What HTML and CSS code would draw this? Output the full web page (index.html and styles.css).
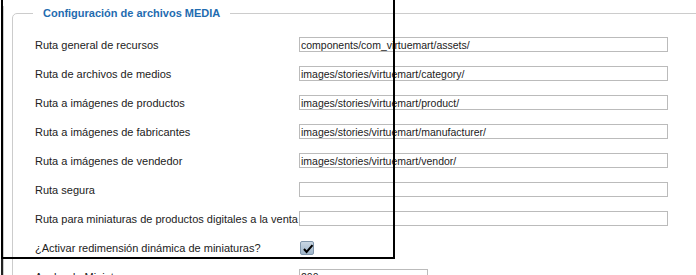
FILE: index.html
```html
<!DOCTYPE html>
<html lang="es">
<head>
    <meta charset="UTF-8">
    <meta name="viewport" content="width=device-width, initial-scale=1.0">
    <title>Configuración MEDIA</title>
    <link rel="stylesheet" href="styles.css">
</head>
<body>

    <div class="page">
        <div class="inner">
            <fieldset class="panel">
                <legend>Configuración de archivos MEDIA</legend>
                <div class="form">
                    <label>Ruta general de recursos</label>
                    <input class="field" type="text" value="components/com_virtuemart/assets/">

                    <label>Ruta de archivos de medios</label>
                    <input class="field" type="text" value="images/stories/virtuemart/category/">

                    <label>Ruta a imágenes de productos</label>
                    <input class="field" type="text" value="images/stories/virtuemart/product/">

                    <label>Ruta a imágenes de fabricantes</label>
                    <input class="field" type="text" value="images/stories/virtuemart/manufacturer/">

                    <label>Ruta a imágenes de vendedor</label>
                    <input class="field" type="text" value="images/stories/virtuemart/vendor/">

                    <label>Ruta segura</label>
                    <input class="field" type="text" value="">

                    <label>Ruta para miniaturas de productos digitales a la venta</label>
                    <input class="field" type="text" value="">

                    <label>¿Activar redimensión dinámica de miniaturas?</label>
                    <span class="check">
                        <svg width="12" height="12" viewBox="0 0 12 12">
                            <path d="M2 6 L4.6 9 L10.5 2.2" fill="none" stroke="#000" stroke-width="2"/>
                        </svg>
                    </span>

                    <label>Ancho de Miniatura</label>
                    <input class="field short" type="text" value="200">
                </div>
            </fieldset>
        </div>
        <div class="marker"></div>
    </div>

</body>
</html>
```

FILE: styles.css
```css
* {
    margin: 0;
    padding: 0;
    box-sizing: border-box;
}

body {
    background: #fff;
    font-family: "Liberation Sans", Arial, sans-serif;
    font-size: 11px;
    color: #222;
    overflow: hidden;
}

.page {
    position: relative;
    margin-left: 1px;
    border-left: 2px solid #222;
    padding-top: 6px;
    min-height: 275px;
}

.inner {
    border-left: 1px solid #ccc;
    min-height: 275px;
    padding-left: 8px;
}

.panel {
    width: 720px;
    border: 1px solid #ccc;
    border-radius: 5px;
    padding: 9px 0 0 22px;
}

.panel legend {
    margin-left: -2px;
    padding: 0 10px;
    font-weight: bold;
    font-size: 11px;
    color: #1f6cb0;
    line-height: 15px;
}

.form {
    display: grid;
    grid-template-columns: 264px 369px;
    grid-auto-rows: 29px;
    align-items: center;
}

.form label {
    white-space: nowrap;
}

.field {
    height: 15px;
    border: 1px solid #bbb;
    padding: 0 1px;
    font-family: "Liberation Sans", Arial, sans-serif;
    font-size: 10.5px;
    color: #222;
    background: #fff;
    outline: none;
}

.field.short {
    width: 129px;
}

.check {
    display: block;
    width: 14px;
    height: 14px;
    margin-left: 1px;
    padding: 1px 0 0 1px;
    border: 1px solid #7f95ab;
    border-radius: 2px;
    background: linear-gradient(#c8d6e3, #9fb5ca);
}

.check svg {
    display: block;
}

.marker {
    position: absolute;
    left: -2px;
    top: -10px;
    width: 394px;
    height: 269px;
    border: 2px solid #000;
    pointer-events: none;
}
```
